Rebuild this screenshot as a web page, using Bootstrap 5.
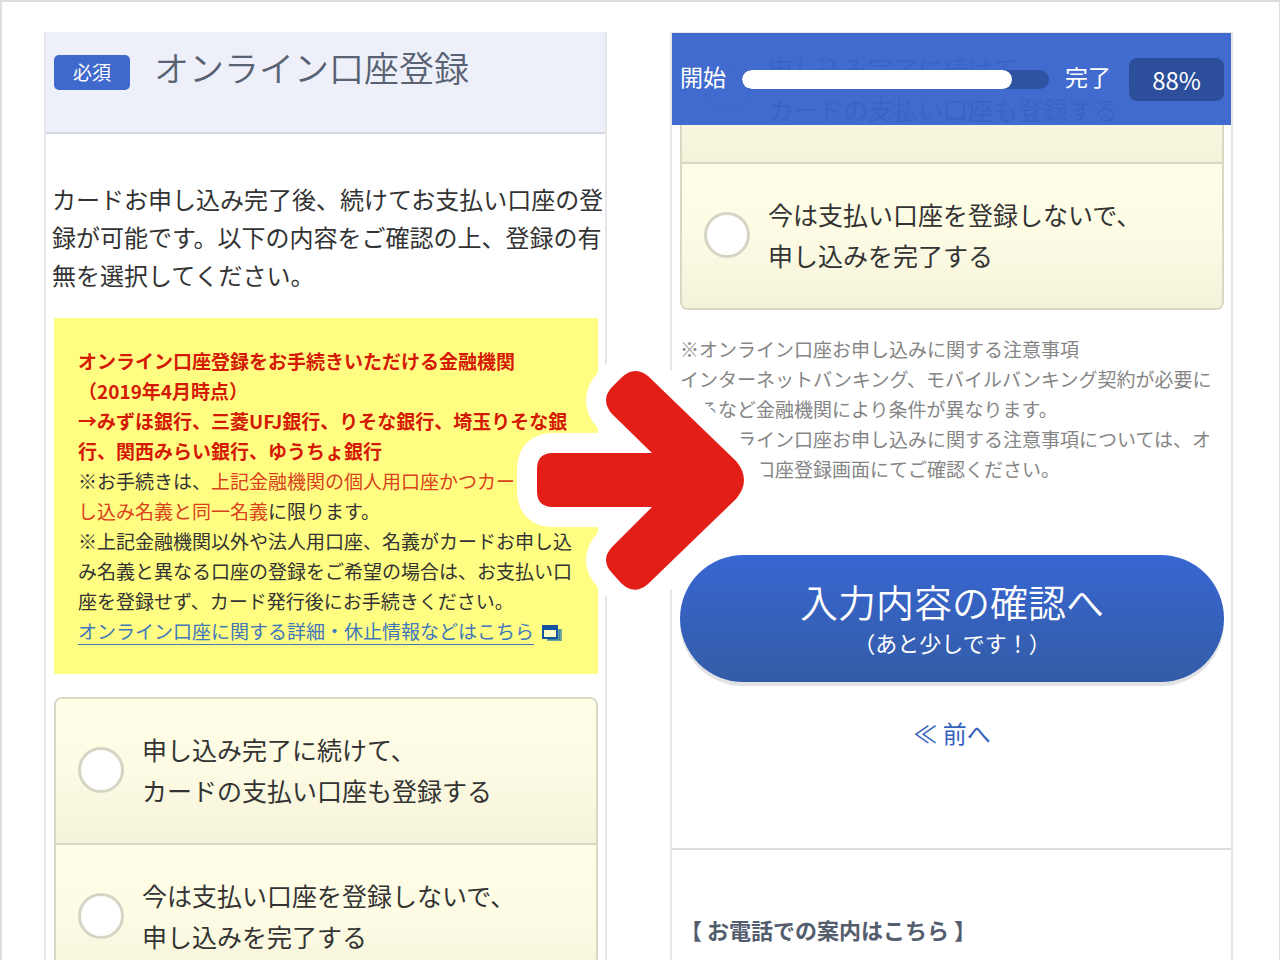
<!DOCTYPE html>
<html lang="ja">
<head>
<meta charset="utf-8">
<meta name="viewport" content="width=device-width, initial-scale=1">
<title>オンライン口座登録</title>
<link href="https://cdn.jsdelivr.net/npm/bootstrap@5.3.0/dist/css/bootstrap.min.css" rel="stylesheet">
<style>
  body { font-family: "Noto Sans CJK JP", sans-serif; color: #333; background: #fff; }
  .stage { border: solid #ddd; border-width: 2px 1px 0 2px; padding: 30px 46px 0 42px; }
  .screens { display: grid; grid-template-columns: 1fr 1fr; column-gap: 63px; }
  .screen { border: solid #e6e6e9; border-width: 0 2px; min-width: 0; }
  .screen-end { border-top-width: 1px; }
  .gutter { padding: 0 7px 0 8px; }

  .title-bar { height: 102px; padding: 14px 8px 0; background: #eef0f9; border-bottom: 2px solid #d5d8de; }
  .title-bar h1 { font-size: 35px; line-height: 42px; font-weight: 350; color: #596273; }
  .tag-required { width: 76px; line-height: 33px; padding-bottom: 2px; border-radius: 5px; background: #4069cd; color: #fff; font-size: 19px; margin: 9px 24px 0 0; }
  .intro { font-size: 24px; line-height: 38px; margin: 46px 0 24px; padding-left: 6px; }

  .notice { background: #fffe83; padding: 28px 24px; font-size: 19px; line-height: 30px; }
  .notice strong { color: #d41a05; }
  .notice em { color: #d9401b; font-style: normal; }
  .notice a { color: #3f77ba; text-decoration: none; border-bottom: 1px solid #3f77ba; }
  .notice a:hover { text-decoration: none; }
  .notice svg { margin-left: 4px; }

  .choices { border: 2px solid #d9d8c3; border-radius: 8px; overflow: hidden; }
  .choice { height: 144px; padding: 0 0 3px 22px; gap: 18px; font-size: 25px; line-height: 41px; background: linear-gradient(#fffee6, #fdfbe3 50%, #f4f2d9); }
  .choice + .choice { border-top: 2px solid #d9d8c3; height: 146px; }
  .choice input { appearance: none; width: 46px; height: 46px; border: 3px solid #d6d4c4; border-radius: 50%; background: #fff; margin: 0; }
  .choices-left { margin-top: 23px; }
  .choices-scrolled { margin-top: -17px; }

  .steps { height: 92px; padding: 0 7px 0 8px; background: rgba(58, 102, 205, .965); color: #fff; font-size: 23px; z-index: 2; }
  .steps .step-name { padding-bottom: 5px; }
  .steps .progress { height: 19px; border-radius: 10px; background: #2f53a2; margin: 0 16px; }
  .steps .progress-bar { background: #fff; border-radius: 10px; }
  .percent { width: 95px; line-height: 43px; border-radius: 8px; background: #2d4f9b; font-size: 24px; margin-left: 18px; }

  .remarks { font-size: 19px; line-height: 30px; color: #858585; margin: 24px 0 71px; }
  .confirm { height: 127px; border: 0; border-radius: 64px; background: linear-gradient(#3866d2, #335ca6); color: #fff; box-shadow: 0 4px 1px #e2e2e5; }
  .confirm:hover { color: #fff; }
  .confirm-main { font-size: 38px; line-height: 46px; font-weight: 350; }
  .confirm-sub { font-size: 22px; line-height: 36px; }
  .back { font-size: 24px; line-height: 36px; color: #3563bf; margin: 33px 0 97px; }
  .phone { border-top: 2px solid #dcdce0; padding-top: 62px; }
  .phone h2 { font-size: 22px; line-height: 34px; font-weight: 700; color: #535d6d; padding-left: 8px; }
  .arrow { z-index: 3; }
</style>
</head>
<body>
<main class="stage position-relative vh-100 overflow-hidden">
  <div class="screens">

    <section class="screen text-nowrap">
      <header class="title-bar d-flex align-items-start">
        <span class="tag-required text-center">必須</span>
        <h1 class="m-0">オンライン口座登録</h1>
      </header>
      <p class="intro">カードお申し込み完了後、続けてお支払い口座の登<br>録が可能です。以下の内容をご確認の上、登録の有<br>無を選択してください。</p>
      <div class="gutter">
        <div class="notice">
          <strong>オンライン口座登録をお手続きいただける金融機関<br>（2019年4月時点）<br>→みずほ銀行、三菱UFJ銀行、りそな銀行、埼玉りそな銀<br>行、関西みらい銀行、ゆうちょ銀行</strong><br>
          ※お手続きは、<em>上記金融機関の個人用口座かつカードお申<br>し込み名義と同一名義</em>に限ります。<br>
          ※上記金融機関以外や法人用口座、名義がカードお申し込<br>み名義と異なる口座の登録をご希望の場合は、お支払い口<br>座を登録せず、カード発行後にお手続きください。<br>
          <a href="#">オンライン口座に関する詳細・休止情報などはこちら</a>
          <svg width="20" height="17" viewBox="0 0 20 17" aria-hidden="true"><path d="M16 4h4v12H5v-2h11z" fill="#6fa7a0"/><path d="M17 5h1v10H6v-1h11z" fill="#3f8193"/><path d="M0 0h16v14H0z" fill="#1552a0"/><path d="M2 5h12v7H2z" fill="#fbfbc4"/></svg>
        </div>
        <div class="choices choices-left">
          <label class="choice d-flex align-items-center"><input type="radio" name="account"><span>申し込み完了に続けて、<br>カードの支払い口座も登録する</span></label>
          <label class="choice d-flex align-items-center"><input type="radio" name="account"><span>今は支払い口座を登録しないで、<br>申し込みを完了する</span></label>
        </div>
      </div>
    </section>

    <section class="screen screen-end text-nowrap position-relative overflow-hidden">
      <header class="steps d-flex align-items-center position-absolute top-0 start-0 end-0">
        <span class="step-name">開始</span>
        <div class="progress flex-grow-1" role="progressbar" aria-label="入力の進み具合" aria-valuenow="88" aria-valuemin="0" aria-valuemax="100"><div class="progress-bar" style="width: 88%"></div></div>
        <span class="step-name">完了</span>
        <span class="percent text-center">88%</span>
      </header>
      <div class="gutter">
        <div class="choices choices-scrolled">
          <label class="choice d-flex align-items-center"><input type="radio" name="account-next"><span>申し込み完了に続けて、<br>カードの支払い口座も登録する</span></label>
          <label class="choice d-flex align-items-center"><input type="radio" name="account-next"><span>今は支払い口座を登録しないで、<br>申し込みを完了する</span></label>
        </div>
        <p class="remarks">※オンライン口座お申し込みに関する注意事項<br>インターネットバンキング、モバイルバンキング契約が必要に<br>なるなど金融機関により条件が異なります。<br>※オンライン口座お申し込みに関する注意事項については、オ<br>ンライン口座登録画面にてご確認ください。</p>
        <button type="button" class="confirm btn w-100 p-0"><span class="confirm-main d-block">入力内容の確認へ</span><span class="confirm-sub d-block">（あと少しです！）</span></button>
        <p class="back text-center"><a href="#" class="text-reset text-decoration-none">≪ 前へ</a></p>
      </div>
      <footer class="phone"><h2>【 お電話での案内はこちら 】</h2></footer>
    </section>

  </div>

  <svg class="arrow position-absolute top-50 start-50 translate-middle" width="248" height="260" viewBox="517 351 248 260" aria-hidden="true">
    <path d="M553 453H652L612 414Q600 400 612 387L621 378Q634 365 648 376L736 461Q752 480 736 499L648 584Q634 596 621 583L612 573Q600 560 612 547L652 507H553Q537 507 537 491V469Q537 453 553 453Z" fill="#e21e17" stroke="#fff" stroke-width="40" stroke-linejoin="round" paint-order="stroke"/>
  </svg>
</main>
<script src="https://cdn.jsdelivr.net/npm/bootstrap@5.3.0/dist/js/bootstrap.bundle.min.js"></script>
</body>
</html>
